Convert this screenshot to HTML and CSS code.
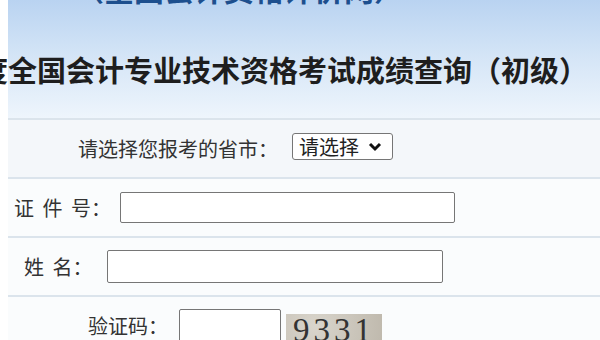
FILE: index.html
```html
<!DOCTYPE html>
<html lang="zh-CN">
<head>
  <meta charset="UTF-8" />
  <title>全国会计专业技术资格考试成绩查询</title>
  <link rel="stylesheet" href="styles.css">
</head>
<body>

  <div class="page">
    <div class="banner">
      <div class="site-name">（全国会计资格评价网）</div>
      <h2 class="title"><span class="cut">2023年度</span>全国会计专业技术资格考试成绩查询（初级）</h2>
    </div>

    <div class="row row-province">
      <label>请选择您报考的省市：</label>
      <span class="select-wrap">
        <select id="province">
          <option value="">请选择</option>
          <option value="bj">北京</option>
          <option value="sh">上海</option>
        </select>
        <svg class="chevron" width="14" height="10" viewBox="0 0 14 10">
          <path d="M2 2 L7 7 L12 2" fill="none" stroke="#111" stroke-width="3" />
        </svg>
      </span>
    </div>

    <div class="row row-id">
      <label class="spaced">证 件 号：</label>
      <input type="text" id="idno" class="field-id" />
    </div>

    <div class="row row-name">
      <label class="spaced">姓 名：</label>
      <input type="text" id="name" class="field-name" />
    </div>

    <div class="row row-code">
      <label>验证码：</label>
      <input type="text" id="code" class="field-code" />
      <div class="captcha">9331</div>
    </div>
  </div>

</body>
</html>
```

FILE: styles.css
```css
body {
  margin: 0;
  background-color: #fff;
  color: #333;
  font-family: "Noto Sans CJK SC", "Noto Sans", sans-serif;
  overflow: hidden;
}
.page {
  margin-left: 8px;
}
.banner {
  height: 118px;
  display: flow-root;
  background: linear-gradient(to bottom, #b9d3f1 0%, #d3e4f6 45%, #eef5fc 100%);
}
.site-name {
  margin-top: -26px;
  padding-left: 66px;
  font-size: 30px;
  line-height: 28px;
  font-weight: bold;
  color: #1d4f8e;
  white-space: nowrap;
}
.title {
  margin: 53px 0 0 0;
  font-size: 29px;
  line-height: 28px;
  font-weight: bold;
  color: #1e1e1e;
  white-space: nowrap;
}
.cut {
  display: inline-block;
  width: 160px;
  margin-left: -160px;
  text-align: right;
}
.row {
  display: flex;
  align-items: center;
  height: 57px;
  border-top: 2px solid #dbe4ec;
  background-color: #fafcfd;
  font-size: 20px;
}
.row-province {
  background-color: #f4f7fa;
  padding-left: 70px;
}
.row-id {
  padding-left: 6px;
}
.row-name {
  padding-left: 16px;
}
.row-code {
  padding-left: 80px;
}
.spaced {
  word-spacing: 4px;
}
.select-wrap {
  position: relative;
  display: inline-block;
  margin-left: 14px;
  margin-top: -4px;
}
select {
  display: block;
  appearance: none;
  height: 27px;
  width: 101px;
  font-family: inherit;
  font-size: 20px;
  line-height: 24px;
  color: #222;
  border: 1px solid #767676;
  border-radius: 3px;
  background-color: #fff;
  padding: 0 0 0 6px;
}
.chevron {
  position: absolute;
  right: 11px;
  top: 9px;
  pointer-events: none;
}
input {
  height: 31px;
  border: 1px solid #767676;
  border-radius: 2px;
  background-color: #fff;
  box-sizing: border-box;
  font-size: 18px;
}
.field-id {
  margin-left: 9px;
  width: 335px;
}
.field-name {
  margin-left: 15px;
  width: 336px;
  height: 33px;
}
.field-code {
  margin-left: 11px;
  width: 102px;
  height: 33px;
}
.captcha {
  margin-left: 5px;
  margin-top: 7px;
  width: 96px;
  height: 30px;
  background: radial-gradient(circle at 30% 40%, #d9d5cc, #bfb9ad);
  font-family: "Liberation Serif", serif;
  font-size: 33px;
  line-height: 32px;
  letter-spacing: 4px;
  color: #333;
  text-align: center;
  overflow: hidden;
}
```
